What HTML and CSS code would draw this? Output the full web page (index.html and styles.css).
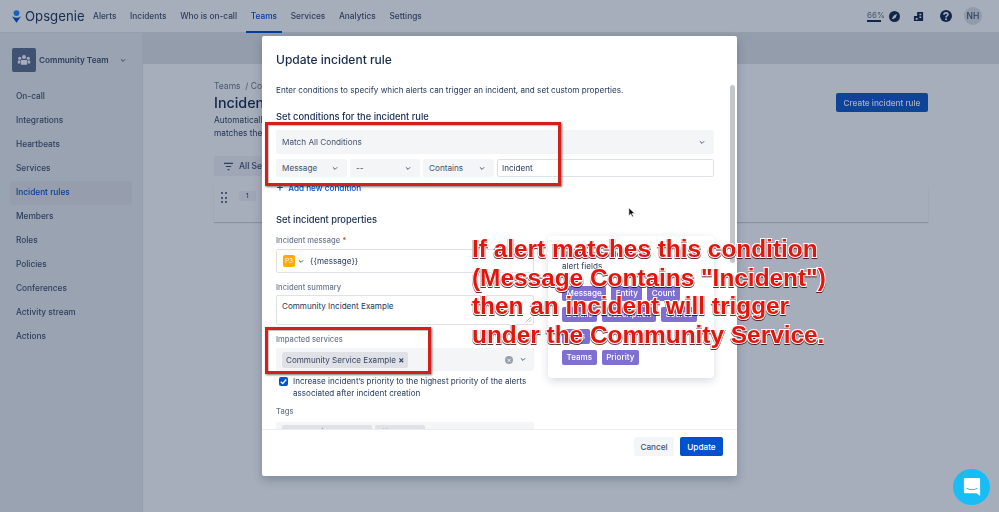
FILE: index.html
```html
<!DOCTYPE html>
<html lang="en">
<head>
<meta charset="utf-8">
<title>Update incident rule</title>
<link rel="stylesheet" href="styles.css">
</head>
<body>
<div class="app">
  <header class="topbar">
    <div class="logo">
      <svg class="logo-mark" viewBox="0 0 10 14"><path fill="#2684ff" d="M5 0a3.2 3.2 0 1 1 0 6.4A3.2 3.2 0 0 1 5 0z"/><path fill="#0052cc" d="M.3 7.2 5 14l4.7-6.8c-.2-.2-.5-.2-.7 0C7.900 8 6.500 8.500 5 8.500S2.100 8 1 7.200c-.2-.2-.5-.2-.7 0z"/></svg>
      <span>Opsgenie</span>
    </div>
    <nav class="nav">
      <a>Alerts</a><a>Incidents</a><a>Who is on-call</a><a class="active">Teams</a><a>Services</a><a>Analytics</a><a>Settings</a>
    </nav>
    <div class="tools">
      <div class="progress"><span>66%</span><i></i></div>
      <svg class="tool t1" viewBox="0 0 12 12"><circle cx="6" cy="6" r="6" fill="#172b4d"/><path fill="#fff" d="M8.800 3.200 7.400 6.900 4.900 8.700 3.200 8.800 4.500 6 6 4.400z"/></svg>
      <svg class="tool t2" viewBox="0 0 12 12"><path fill="#172b4d" d="M4.500 1h6.500v10H1V5.500h3.500z"/><path fill="#fff" d="M3 7.500h2v2H3zM7 3h2v1.500H7zM7 6h2v1.500H7z"/></svg>
      <svg class="tool t3" viewBox="0 0 12 12"><circle cx="6" cy="6" r="6" fill="#172b4d"/><path fill="none" stroke="#fff" stroke-width="1.600" d="M4 4.700C4 2.300 8 2.300 8 4.500 8 6 6 5.800 6 7.400"/><circle cx="6" cy="9.200" r="1" fill="#fff"/></svg>
      <div class="avatar">NH</div>
    </div>
  </header>
  <div class="shell">
    <aside class="sidebar">
      <div class="team">
        <div class="team-icon">
          <svg viewBox="0 0 16 14"><circle cx="8" cy="3.500" r="2.300" fill="#fff"/><circle cx="3" cy="5" r="1.800" fill="#fff"/><circle cx="13" cy="5" r="1.800" fill="#fff"/><path fill="#fff" d="M4.500 7h7v5.500h-7zM.8 7.500h3v3.500h-3zM12.200 7.500h3v3.500h-3z"/></svg>
        </div>
        <span>Community Team</span>
        <svg class="chev" viewBox="0 0 10 6"><path d="M1.500 1 5 4.500 8.500 1"/></svg>
      </div>
      <ul class="side-list">
        <li>On-call</li><li>Integrations</li><li>Heartbeats</li><li>Services</li><li class="current">Incident rules</li><li>Members</li><li>Roles</li><li>Policies</li><li>Conferences</li><li>Activity stream</li><li>Actions</li>
      </ul>
    </aside>
    <main class="main">
      <div class="strip"></div>
      <div class="content">
        <div class="head-row">
          <div>
            <div class="crumbs">Teams &nbsp;/ Community Team</div>
            <h1>Incident rules</h1>
          </div>
          <button class="btn primary">Create incident rule</button>
        </div>
        <p class="desc">Automatically create incidents when an alert<br>matches the conditions of a rule.</p>
        <div class="filter">
          <svg viewBox="0 0 12 10"><path d="M1 1.500h10M3 5h6M5 8.500h2"/></svg>
          <span>All Services</span>
        </div>
        <div class="rule-card">
          <div class="grip"><i></i><i></i><i></i><i></i><i></i><i></i></div>
          <span class="num">1</span>
        </div>
      </div>
    </main>
  </div>
</div>

<div class="blanket"></div>

<section class="modal">
  <div class="modal-body">
    <h2>Update incident rule</h2>
    <p class="intro">Enter conditions to specify which alerts can trigger an incident, and set custom properties.</p>
    <h3 class="cond-title">Set conditions for the incident rule</h3>
    <div class="select wide"><span>Match All Conditions</span><svg class="chev" viewBox="0 0 10 6"><path d="M1.500 1 5 4.500 8.500 1"/></svg></div>
    <div class="cond-row">
      <div class="select"><span>Message</span><svg class="chev" viewBox="0 0 10 6"><path d="M1.500 1 5 4.500 8.500 1"/></svg></div>
      <div class="select"><span>--</span><svg class="chev" viewBox="0 0 10 6"><path d="M1.500 1 5 4.500 8.500 1"/></svg></div>
      <div class="select"><span>Contains</span><svg class="chev" viewBox="0 0 10 6"><path d="M1.500 1 5 4.500 8.500 1"/></svg></div>
      <div class="input cond-input">Incident</div>
    </div>
    <a class="add-link"><b>+</b> Add new condition</a>
    <h3 class="prop-title">Set incident properties</h3>
    <div class="props">
      <div class="form">
        <label>Incident message<em> *</em></label>
        <div class="input msg"><span class="prio">P3</span><svg class="chev" viewBox="0 0 10 6"><path d="M1.500 1 5 4.500 8.500 1"/></svg><span class="msg-text">{{message}}</span></div>
        <label class="l2">Incident summary</label>
        <div class="input area">Community Incident Example<svg class="resize" viewBox="0 0 8 8"><path d="M1 7 7 1M4 7l3-3"/></svg></div>
        <label class="l3">Impacted services</label>
        <div class="multi">
          <span class="tag">Community Service Example <b>×</b></span>
          <span class="clear">×</span>
          <svg class="chev" viewBox="0 0 10 6"><path d="M1.500 1 5 4.500 8.500 1"/></svg>
        </div>
        <div class="check">
          <span class="box"><svg viewBox="0 0 10 10"><path d="M2 5.200 4.200 7.300 8 2.800"/></svg></span>
          <span>Increase incident’s priority to the highest priority of the alerts associated after incident creation</span>
        </div>
        <label class="l4">Tags</label>
        <div class="multi tags"><span class="tag ghost">community-example</span><span class="tag ghost">{{tags}} ×</span></div>
      </div>
      <aside class="helper">
        <p>Use placeholders to fill<br>alert fields</p>
        <div class="chips"><span>Message</span><span>Entity</span><span>Count</span></div>
        <div class="chips"><span>Details</span><span>Description</span><span>Source</span></div>
        <div class="chips"><span>Tags</span></div>
        <div class="chips"><span>Teams</span><span>Priority</span></div>
      </aside>
    </div>
  </div>
  <div class="scroll-thumb"></div>
  <footer class="modal-foot">
    <button class="btn subtle">Cancel</button>
    <button class="btn primary strong">Update</button>
  </footer>
</section>

<svg class="cursor" viewBox="0 0 10 14"><path fill="#111" stroke="#fff" stroke-width=".8" d="M1 1v10l2.500-2.200 1.700 3.800 1.600-.7-1.700-3.700H8.500z"/></svg>

<div class="callout box-a"></div>
<div class="callout box-b"></div>
<p class="note">If alert matches this condition<br>(Message Contains "Incident")<br>then an incident will trigger<br>under the Community Service.</p>

<button class="chat" aria-label="Chat">
  <svg viewBox="0 0 20 22"><path fill="#fff" d="M2.500 1h15A1.500 1.500 0 0 1 19 2.500V21l-4-3H2.500A1.500 1.500 0 0 1 1 16.500v-14A1.500 1.500 0 0 1 2.500 1z"/><path fill="none" stroke="#18bdf5" stroke-width="1.200" stroke-linecap="round" d="M4.500 12.500c3 2 8 2 11 0"/></svg>
</button>
</body>
</html>
```

FILE: styles.css
```css
* { box-sizing: border-box; }
html, body { margin: 0; height: 100%; overflow: hidden; }
body { width: 999px; height: 512px; position: relative; font-family: Inter, "Liberation Sans", sans-serif; font-size: 8.500px; color: #172b4d; background: #fff; }
h1, h2, h3, p, ul { margin: 0; padding: 0; }
button { font-family: inherit; border: 0; }
svg { display: block; }

.app { display: flex; flex-direction: column; height: 512px; filter: blur(.35px); }
.topbar { height: 33px; flex: none; display: flex; align-items: center; padding: 0 12px; border-bottom: 1px solid #e4e6ea; background: #fff; }
.logo { display: flex; align-items: center; gap: 4px; width: 76px; font-size: 13.200px; color: #253858; }
.logo-mark { width: 9px; height: 13px; }
.nav { display: flex; gap: 3.700px; height: 33px; }
.nav a { display: flex; align-items: center; padding: 1px 5px 0; font-size: 8.300px; font-weight: 500; color: #42526e; border-bottom: 2px solid transparent; }
.nav a.active { color: #0052cc; border-bottom-color: #0052cc; }
.tools { margin-left: auto; display: flex; align-items: center; padding-right: 5px; }
.progress { width: 17px; font-size: 8px; color: #6b778c; margin-right: 4.500px; }
.progress span { display: block; line-height: 10px; }
.progress i { display: block; height: 2px; width: 14px; background: #172b4d; }
.tool { width: 11px; height: 11px; }
.t2 { margin: 0 0 0 13px; }
.t3 { margin: 0 0 0 16.500px; width: 12px; height: 12px; }
.avatar { margin-left: 12px; width: 18px; height: 18px; border-radius: 50%; background: #dfe1e6; display: flex; align-items: center; justify-content: center; font-size: 8.500px; font-weight: 500; color: #42526e; }

.shell { flex: 1; display: flex; min-height: 0; }
.sidebar { width: 143px; flex: none; background: #edeef1; padding: 15px 10px 0; border-right: 1px solid #e4e5e8; }
.team { display: flex; align-items: center; height: 24px; padding-left: 2px; font-weight: 600; font-size: 8.200px; color: #42526e; margin-bottom: 13.400px; white-space: nowrap; }
.team-icon { width: 24px; height: 24px; border-radius: 2px; background: #5e6f8d; display: flex; align-items: center; justify-content: center; margin-right: 3px; flex: none; }
.team-icon svg { width: 14px; height: 12px; }
.team .chev { margin-left: 11px; }
.chev { width: 6px; height: 5px; flex: none; fill: none; stroke: #344563; stroke-width: 1.500; }
.side-list { list-style: none; }
.side-list li { height: 24px; line-height: 23px; padding-left: 6px; font-weight: 500; font-size: 8.300px; color: #42526e; border-radius: 3px; margin-bottom: -.08px; }
.side-list .current { background: #e6e7ea; color: #0052cc; }

.main { flex: 1; min-width: 0; background: #fff; }
.strip { height: 31px; background: #e3e4e7; }
.content { padding: 15px 71px 0; }
.head-row { display: flex; justify-content: space-between; align-items: flex-start; }
.crumbs { font-size: 8.500px; color: #6b778c; line-height: 14px; }
h1 { font-size: 14.300px; font-weight: 500; line-height: 20px; color: #172b4d; }
.btn { display: inline-flex; align-items: center; justify-content: center; border-radius: 2px; font-size: 8.200px; font-weight: 500; white-space: nowrap; }
.primary { background: #1059c9; color: #fff; }
.head-row .btn { height: 19px; width: 92px; margin-top: 14px; }
.desc { font-size: 8.300px; line-height: 13px; color: #344563; margin-top: 1px; }
.filter { display: flex; align-items: center; gap: 5px; margin-top: 16px; height: 20px; width: 300px; padding-left: 9px; background: #f4f5f7; font-size: 8.500px; font-weight: 500; color: #42526e; }
.filter svg { width: 11px; height: 9px; fill: none; stroke: #42526e; stroke-width: 1.200; }
.rule-card { display: flex; align-items: flex-start; height: 37px; margin-top: 9px; padding: 6px 0 0 7px; box-shadow: 0 1px 1px rgba(9, 30, 66, .2); background: #fff; }
.grip { display: grid; grid-template-columns: 2px 2px; gap: 2.500px 2px; width: 9px; margin-top: 1px; }
.grip i { width: 2px; height: 2px; background: #6b778c; }
.num { margin-left: 9px; background: #f4f5f7; font-size: 6.500px; padding: 1px 7px; border-radius: 2px; }

.blanket { position: absolute; inset: 0; background: rgba(9, 30, 66, .36); }

.modal { position: absolute; left: 262px; top: 36px; width: 475px; height: 440px; background: #fff; border-radius: 2px; box-shadow: 0 4px 10px rgba(9, 30, 66, .25); display: flex; flex-direction: column; filter: blur(.35px); }
.modal-body { flex: 1; min-height: 0; overflow: hidden; padding: 15px 23px 0 14px; }
h2 { font-size: 12px; font-weight: 500; line-height: 18px; color: #172b4d; }
.intro { font-size: 8.150px; color: #253858; line-height: 12px; margin-top: 15px; white-space: nowrap; }
h3 { font-size: 9.300px; font-weight: 500; line-height: 14px; color: #172b4d; }
.cond-title { margin-top: 14px; }
.select { display: flex; align-items: center; justify-content: space-between; padding: 0 9px 0 6px; height: 18px; background: #f4f5f7; border-radius: 2px; font-size: 8.200px; color: #42526e; }
.select.wide { height: 24px; margin-top: 6px; padding-right: 9px; }
.cond-row { display: grid; grid-template-columns: 71px 70px 71px 1fr; gap: 3px; margin-top: 5px; }
.input { border: 1px solid #dfe1e6; border-radius: 2px; background: #fff; font-size: 8.100px; color: #253858; }
.cond-input { display: flex; align-items: center; padding-left: 4px; }
.add-link { display: block; margin-top: 5px; line-height: 12px; font-size: 8.200px; font-weight: 500; color: #0052cc; }
.add-link b { font-weight: 400; font-size: 12px; line-height: 10px; margin-right: 2px; }
.prop-title { margin-top: 19px; }
.props { display: flex; gap: 14px; margin-top: 8px; }
.form { width: 258px; flex: none; }
label { display: block; font-size: 7.600px; font-weight: 500; line-height: 12px; color: #6b778c; }
label em { color: #de350b; font-style: normal; }
.msg { display: flex; align-items: center; height: 24px; margin-top: 2px; padding-left: 6px; }
.prio { width: 12px; height: 12px; border-radius: 2px; background: #ffab00; color: #fff; font-size: 6.500px; display: flex; align-items: center; justify-content: center; }
.msg .chev { margin-left: 3px; }
.msg-text { margin-left: 6px; }
.l2 { margin-top: 9px; }
.area { position: relative; height: 30px; margin-top: 1px; padding: 5px 5px; }
.resize { position: absolute; right: 1px; bottom: 1px; width: 7px; height: 7px; fill: none; stroke: #97a0af; stroke-width: .8; }
.l3 { margin-top: 9px; }
.multi { display: flex; align-items: center; height: 23px; margin-top: 2px; padding: 0 8px 0 6px; background: #f4f5f7; border-radius: 2px; font-size: 8.100px; color: #344563; }
.tag { background: #dfe1e6; border-radius: 2px; padding: 0 4px; line-height: 15px; white-space: nowrap; }
.tag b { font-size: 9px; margin-left: 0; }
.clear { margin-left: auto; margin-right: 7px; width: 8px; height: 8px; border-radius: 50%; background: #97a0af; color: #f4f5f7; font-size: 7px; line-height: 8px; text-align: center; }
.check { display: flex; gap: 5px; margin-top: 4px; padding-left: 3px; font-size: 8.100px; line-height: 12px; color: #253858; }
.box { flex: none; width: 9px; height: 9px; margin-top: 2px; border-radius: 2px; background: #0052cc; }
.box svg { width: 9px; height: 9px; fill: none; stroke: #fff; stroke-width: 1.500; }
.l4 { margin-top: 7px; }
.tags { gap: 3px; margin-top: 4px; height: 22px; align-items: flex-start; padding-top: 3px; }
.ghost { color: #344563; padding: 0 6px; }
.helper { width: 166px; height: 142px; margin-top: 1px; background: #fff; border-radius: 4px; box-shadow: 0 3px 8px rgba(9, 30, 66, .16); padding: 12px 14px 0; font-size: 8.100px; color: #253858; }
.helper p { line-height: 12px; margin: 0 0 14px -3px; padding-left: 3px; white-space: nowrap; }
.chips { display: flex; gap: 5px; margin-bottom: 6.300px; }
.chips span { height: 15px; line-height: 15px; padding: 0 4.500px; border-radius: 2px; background: #7f6fd1; color: #fff; font-size: 8.100px; font-weight: 500; }
.scroll-thumb { position: absolute; right: 2px; top: 49px; width: 5px; height: 178px; background: #c4c6ca; border-radius: 3px; }
.modal-foot { height: 47px; flex: none; display: flex; align-items: flex-start; justify-content: flex-end; gap: 6px; padding: 7px 14px 0; border-top: 1px solid #ebecf0; }
.modal-foot .btn { height: 19px; }
.subtle { background: #f4f5f7; color: #42526e; width: 40px; }
.strong { background: #0052cc; width: 43px; }

.cursor { position: absolute; left: 628px; top: 207px; width: 8px; height: 11px; }
.callout { position: absolute; border: 3px solid #d4201a; box-shadow: 1px 1px 2px rgba(0, 0, 0, .55), inset 1px 1px 1px rgba(0, 0, 0, .25); }
.box-a { left: 265px; top: 122px; width: 296px; height: 64px; }
.box-b { left: 265px; top: 327px; width: 166px; height: 47px; }
.note { position: absolute; left: 472px; top: 235px; font-family: "Liberation Sans", Arial, sans-serif; font-weight: 700; font-size: 24.400px; line-height: 28.700px; color: #e3150c; white-space: nowrap; -webkit-text-stroke: 2.200px #fff; paint-order: stroke fill; filter: drop-shadow(0 1px .7px rgba(60, 0, 0, .8)); }
.chat { position: absolute; left: 953px; top: 469px; width: 37px; height: 36px; border-radius: 50%; background: #18bdf5; display: flex; align-items: center; justify-content: center; padding: 0; }
.chat svg { width: 18px; height: 20px; }
```
